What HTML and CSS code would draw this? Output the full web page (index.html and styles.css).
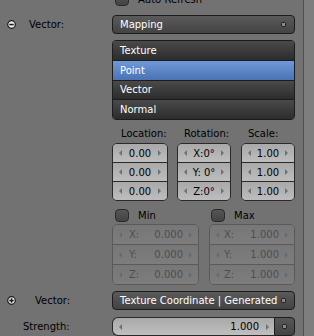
FILE: index.html
```html
<!DOCTYPE html>
<html>
<head>
<meta charset="utf-8">
<link rel="stylesheet" href="styles.css">
</head>
<body>
<div class="screen">
  <div class="panel">
    <div class="row-auto">
      <span class="check"></span><span class="check-label">Auto Refresh</span>
    </div>

    <div class="row row-top">
      <div class="lab lab-vec1">
        <svg class="toggle" width="9" height="9" viewBox="0 0 9 9"><circle cx="4.5" cy="4.5" r="3.8" fill="#e8e8e8" stroke="#1a1a1a" stroke-width="1.2"/><rect x="2.3" y="3.8" width="4.4" height="1.5" fill="#1a1a1a"/></svg>
        <span class="lab-text">Vector:</span>
      </div>
      <div class="menu-btn">Mapping<span class="dot"></span></div>
    </div>

    <div class="enum">
      <div class="enum-item">Texture</div>
      <div class="enum-item active">Point</div>
      <div class="enum-item">Vector</div>
      <div class="enum-item">Normal</div>
    </div>

    <div class="tri">
      <div class="col col-loc">
        <div class="col-title">Location:</div>
        <div class="nums">
          <div class="num"><span class="arr l"></span><span class="v">0.00</span><span class="arr r"></span></div>
          <div class="num"><span class="arr l"></span><span class="v">0.00</span><span class="arr r"></span></div>
          <div class="num"><span class="arr l"></span><span class="v">0.00</span><span class="arr r"></span></div>
        </div>
      </div>
      <div class="col col-rot">
        <div class="col-title">Rotation:</div>
        <div class="nums">
          <div class="num"><span class="arr l"></span><span class="v">X:0°</span><span class="arr r"></span></div>
          <div class="num"><span class="arr l"></span><span class="v">Y: 0°</span><span class="arr r"></span></div>
          <div class="num"><span class="arr l"></span><span class="v">Z:0°</span><span class="arr r"></span></div>
        </div>
      </div>
      <div class="col col-sca">
        <div class="col-title">Scale:</div>
        <div class="nums">
          <div class="num"><span class="arr l"></span><span class="v">1.00</span><span class="arr r"></span></div>
          <div class="num"><span class="arr l"></span><span class="v">1.00</span><span class="arr r"></span></div>
          <div class="num"><span class="arr l"></span><span class="v">1.00</span><span class="arr r"></span></div>
        </div>
      </div>
    </div>

    <div class="checks">
      <div class="ck ck-min"><span class="check"></span><span class="check-label">Min</span></div>
      <div class="ck ck-max"><span class="check"></span><span class="check-label">Max</span></div>
    </div>

    <div class="minmax">
      <div class="dis dis-min">
        <div class="drow"><span class="arr l"></span><span class="ax">X:</span><span class="dv">0.000</span><span class="arr r"></span></div>
        <div class="drow"><span class="arr l"></span><span class="ax">Y:</span><span class="dv">0.000</span><span class="arr r"></span></div>
        <div class="drow"><span class="arr l"></span><span class="ax">Z:</span><span class="dv">0.000</span><span class="arr r"></span></div>
      </div>
      <div class="dis dis-max">
        <div class="drow"><span class="arr l"></span><span class="ax">X:</span><span class="dv">1.000</span><span class="arr r"></span></div>
        <div class="drow"><span class="arr l"></span><span class="ax">Y:</span><span class="dv">1.000</span><span class="arr r"></span></div>
        <div class="drow"><span class="arr l"></span><span class="ax">Z:</span><span class="dv">1.000</span><span class="arr r"></span></div>
      </div>
    </div>

    <div class="row row-vec2">
      <div class="lab lab-vec2">
        <svg class="toggle" width="9" height="9" viewBox="0 0 9 9"><circle cx="4.5" cy="4.5" r="3.8" fill="#e8e8e8" stroke="#1a1a1a" stroke-width="1.2"/><rect x="2.3" y="3.8" width="4.4" height="1.5" fill="#1a1a1a"/><rect x="3.8" y="2.3" width="1.5" height="4.4" fill="#1a1a1a"/></svg>
        <span class="lab-text">Vector:</span>
      </div>
      <div class="menu-btn">Texture Coordinate | Generated<span class="dot"></span></div>
    </div>

    <div class="row row-str">
      <div class="lab lab-str"><span class="lab-text">Strength:</span></div>
      <div class="slider">
        <div class="slider-main"><span class="arr l"></span><span class="sv">1.000</span><span class="arr r"></span></div>
        <div class="slider-sock"><span class="dot"></span></div>
      </div>
    </div>
  </div>
  <div class="strip"></div>
</div>
</body>
</html>
```

FILE: styles.css
```css
html, body {
  margin: 0;
  padding: 0;
}
body {
  width: 314px;
  height: 336px;
  overflow: hidden;
  background: #727272;
  font-family: "DejaVu Sans", sans-serif;
  font-size: 10px;
  color: #000;
}
.screen {
  display: flex;
  width: 314px;
  height: 336px;
}
.panel {
  width: 303px;
  border-right: 1px solid #505050;
  display: flex;
  flex-direction: column;
}
.strip {
  flex: 1;
  background: #7e7e7e;
}

/* checkbox */
.check {
  display: inline-block;
  box-sizing: border-box;
  width: 14px;
  height: 13px;
  border: 1px solid #2a2a2a;
  border-radius: 4px;
  background: linear-gradient(#555555, #444444);
}
.check-label {
  margin-left: 9px;
  line-height: 13px;
}
.row-auto {
  display: flex;
  align-items: center;
  margin-top: -7px;
  height: 13px;
  padding-left: 115px;
}

/* generic rows */
.row {
  display: flex;
  align-items: center;
}
.lab {
  width: 112px;
  position: relative;
  height: 19px;
  display: flex;
  align-items: center;
}
.toggle {
  position: absolute;
  left: 7px;
  top: 5px;
}
.lab-vec1 { padding-left: 29px; box-sizing: border-box; }
.lab-vec2 { padding-left: 35px; box-sizing: border-box; }
.lab-str { padding-left: 23px; box-sizing: border-box; }

.row-top { margin-top: 9px; }

.menu-btn {
  position: relative;
  box-sizing: border-box;
  width: 183px;
  height: 19px;
  border: 1px solid #1c1c1c;
  border-radius: 4px;
  background: linear-gradient(#5a5a5a, #434343);
  color: #fff;
  padding-left: 7px;
  display: flex;
  align-items: center;
}
.dot {
  position: absolute;
  right: 8px;
  top: 6px;
  box-sizing: border-box;
  width: 5px;
  height: 5px;
  border: 1px solid #1a1a1a;
  border-radius: 1.5px;
  background: #8c8c8c;
}

/* enum list */
.enum {
  margin-top: 6px;
  margin-left: 112px;
  width: 183px;
  box-sizing: border-box;
  border: 1px solid #1c1c1c;
  border-radius: 4px;
  overflow: hidden;
  display: flex;
  flex-direction: column;
}
.enum-item {
  height: 20px;
  box-sizing: border-box;
  padding-left: 7px;
  display: flex;
  align-items: center;
  color: #fff;
  background: linear-gradient(#4a4a4a, #2c2c2c);
  border-top: 1px solid #1c1c1c;
}
.enum-item:first-child {
  border-top: none;
  height: 19px;
}
.enum-item.active {
  background: linear-gradient(#6f99d9, #4a73b4);
}

/* location / rotation / scale */
.tri {
  margin-top: 8px;
  margin-left: 112px;
  display: flex;
}
.col-loc { width: 56px; }
.col-rot { width: 54px; margin-left: 9px; }
.col-sca { width: 54px; margin-left: 10px; }
.col-title {
  height: 12px;
  line-height: 12px;
  margin-bottom: 3px;
}
.col-loc .col-title { padding-left: 9px; }
.col-rot .col-title { padding-left: 7px; }
.col-sca .col-title { padding-left: 7px; }

.nums {
  box-sizing: border-box;
  border: 1px solid #2a2a2a;
  border-radius: 5px;
  overflow: hidden;
  display: flex;
  flex-direction: column;
}
.num {
  position: relative;
  height: 19px;
  box-sizing: border-box;
  display: flex;
  align-items: center;
  justify-content: center;
  background: linear-gradient(#a9a9a9, #bdbdbd);
  border-top: 1px solid #2a2a2a;
}
.num:first-child {
  border-top: none;
  height: 18px;
}
.arr {
  position: absolute;
  top: 50%;
  margin-top: -3px;
  width: 0;
  height: 0;
  border-top: 3px solid transparent;
  border-bottom: 3px solid transparent;
}
.arr.l {
  left: 6px;
  border-right: 3px solid #707070;
}
.arr.r {
  right: 6px;
  border-left: 3px solid #707070;
}

/* min / max checks */
.checks {
  margin-top: 8px;
  margin-left: 112px;
  display: flex;
  height: 13px;
}
.ck {
  display: flex;
  align-items: center;
}
.ck-min { width: 97px; padding-left: 3px; box-sizing: border-box; }
.ck-max { padding-left: 2px; }

/* disabled boxes */
.minmax {
  margin-top: 2px;
  margin-left: 112px;
  display: flex;
}
.dis {
  box-sizing: border-box;
  border: 1px solid #5a5a5a;
  border-radius: 5px;
  overflow: hidden;
  display: flex;
  flex-direction: column;
  color: #4e4e4e;
}
.dis-min { width: 87px; }
.dis-max { width: 86px; margin-left: 10px; }
.drow {
  position: relative;
  height: 20px;
  box-sizing: border-box;
  display: flex;
  align-items: center;
  padding-left: 16px;
  padding-right: 15px;
  background: linear-gradient(#777777, #7d7d7d);
  border-top: 1px solid #5a5a5a;
}
.drow:first-child {
  border-top: none;
  height: 19px;
}
.dis-max .drow { padding-left: 14px; }
.drow .ax { flex: 1; }
.drow .arr.l { left: 6px; border-right-color: #6a6a6a; }
.drow .arr.r { right: 6px; border-left-color: #6a6a6a; }

/* bottom rows */
.row-vec2 { margin-top: 6px; }
.row-vec2 .dot { top: 6px; }
.row-str { margin-top: 7px; }

.slider {
  width: 183px;
  height: 19px;
  display: flex;
}
.slider-main {
  position: relative;
  flex: 1;
  box-sizing: border-box;
  border: 1px solid #2a2a2a;
  border-right: none;
  border-radius: 6px 0 0 6px;
  background: linear-gradient(#a9a9a9, #bfbfbf);
  display: flex;
  align-items: center;
  justify-content: flex-end;
  padding-right: 15px;
}
.slider-main .arr.r { right: 5px; }
.slider-sock {
  position: relative;
  width: 21px;
  box-sizing: border-box;
  border: 1px solid #1c1c1c;
  border-radius: 0 4px 4px 0;
  background: linear-gradient(#575757, #434343);
}
.slider-sock .dot {
  right: 7px;
  top: 6px;
}
```
